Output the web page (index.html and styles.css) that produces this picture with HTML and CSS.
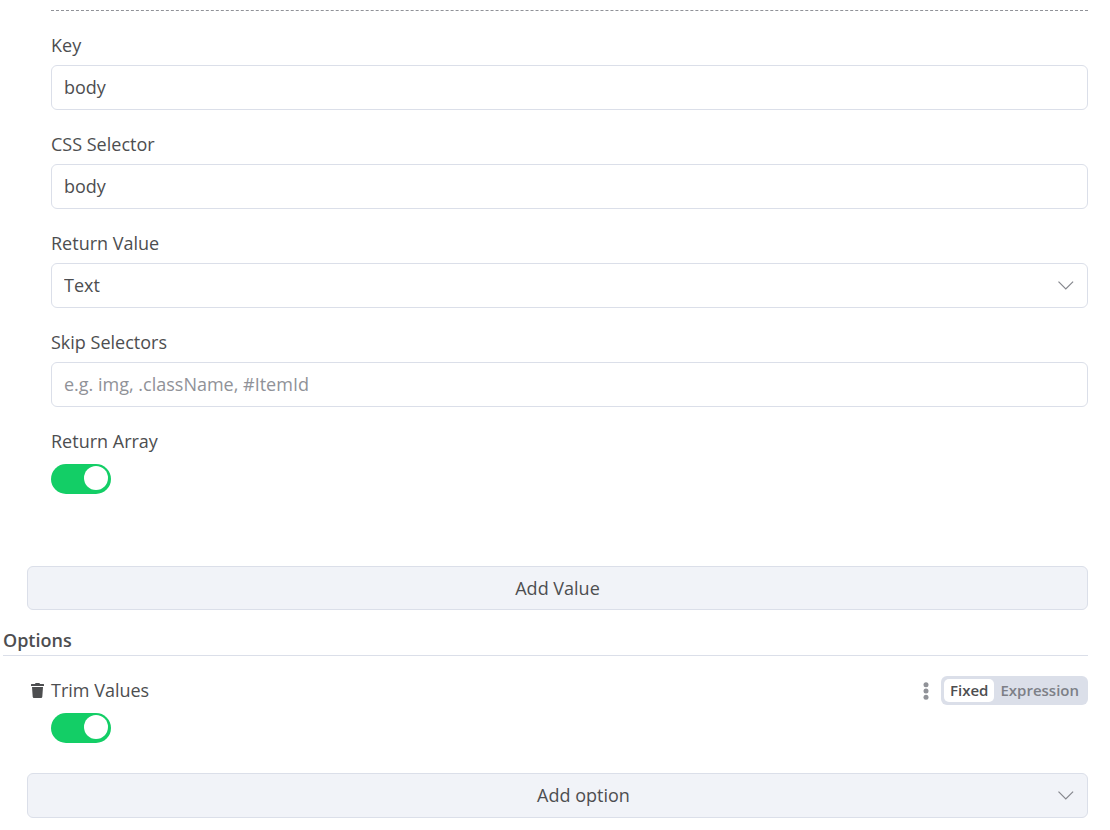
FILE: index.html
```html
<!DOCTYPE html>
<html lang="en">
<head>
<meta charset="utf-8">
<meta name="viewport" content="width=device-width, initial-scale=1">
<title>Node parameters</title>
<link rel="stylesheet" href="styles.css">
</head>
<body>
<form class="parameters">
  <section class="values">
    <div class="value-item">
      <div class="field">
        <label class="label" for="key">Key</label>
        <input class="control" id="key" type="text" value="body">
      </div>
      <div class="field">
        <label class="label" for="css-selector">CSS Selector</label>
        <input class="control" id="css-selector" type="text" value="body">
      </div>
      <div class="field">
        <label class="label" for="return-value">Return Value</label>
        <div class="select-wrap">
          <select class="control" id="return-value"><option>Text</option></select>
          <svg class="chevron" viewBox="0 0 16 9" aria-hidden="true"><path d="M0.5 0.7 7.8 8 15.1 0.7"/></svg>
        </div>
      </div>
      <div class="field">
        <label class="label" for="skip-selectors">Skip Selectors</label>
        <input class="control" id="skip-selectors" type="text" placeholder="e.g. img, .className, #ItemId">
      </div>
      <div class="field">
        <label class="label" for="return-array">Return Array</label>
        <input class="switch" id="return-array" type="checkbox" role="switch" checked>
      </div>
    </div>
    <button class="add-button" type="button">Add Value</button>
  </section>

  <section class="options">
    <h2 class="heading">Options</h2>
    <div class="option">
      <div class="option-header">
        <button class="icon-button" type="button" aria-label="Delete">
          <svg class="trash" viewBox="0 0 13 15" aria-hidden="true"><path d="M0.5 1H4L4.6 0H8.4L9 1H12.5Q13 1 13 1.5V3H0V1.5Q0 1 0.5 1ZM1 4H12L11.3 13.7Q11.2 15 10 15H3Q1.8 15 1.7 13.7Z"/></svg>
        </button>
        <label class="label" for="trim-values">Trim Values</label>
        <button class="icon-button menu" type="button" aria-label="Parameter options">
          <svg class="dots" viewBox="0 0 6 18" aria-hidden="true"><circle cx="3" cy="2.7" r="2.5"/><circle cx="3" cy="9" r="2.5"/><circle cx="3" cy="15.3" r="2.5"/></svg>
        </button>
        <div class="segmented">
          <button class="segment selected" type="button" aria-pressed="true">Fixed</button>
          <button class="segment" type="button" aria-pressed="false">Expression</button>
        </div>
      </div>
      <input class="switch" id="trim-values" type="checkbox" role="switch" checked>
    </div>
    <div class="select-wrap add-option">
      <select class="control" aria-label="Add option"><option>Add option</option></select>
      <svg class="chevron" viewBox="0 0 16 9" aria-hidden="true"><path d="M0.5 0.7 7.8 8 15.1 0.7"/></svg>
    </div>
  </section>
</form>
</body>
</html>
```
FILE: styles.css
```css
* {
  box-sizing: border-box;
}

body {
  margin: 0;
  background: #fff;
  color: #4d4e50;
  font: 18px/24px "Open Sans", sans-serif;
}

button,
input,
select {
  margin: 0;
  color: inherit;
  font: inherit;
}

.parameters {
  padding: 10px 22px 12px 3px;
}

.values {
  padding-left: 24px;
}

.value-item {
  display: grid;
  gap: 22px;
  margin: 0 0 72px 24px;
  padding-top: 22px;
  border-top: 1px dashed #909298;
}

.field {
  display: grid;
  gap: 8px;
}

.label {
  justify-self: start;
}

.control {
  display: block;
  width: 100%;
  height: 45px;
  padding: 0 12px 2px;
  border: 1px solid #dbdfe9;
  border-radius: 6px;
  background: #fff;
  appearance: none;
}

.control::placeholder {
  color: #909298;
  opacity: 1;
}

.select-wrap {
  position: relative;
}

.chevron {
  position: absolute;
  top: 18px;
  right: 14px;
  width: 16px;
  height: 9px;
  fill: none;
  stroke: #85878d;
  stroke-width: 1.2;
  pointer-events: none;
}

.switch {
  position: relative;
  display: block;
  width: 60px;
  height: 30px;
  border-radius: 15px;
  background: #cfd3dd;
  appearance: none;
}

.switch::after {
  content: "";
  position: absolute;
  top: 2px;
  left: 3px;
  width: 24px;
  height: 24px;
  border-radius: 50%;
  background: #fff;
}

.switch:checked {
  background: #13ce66;
}

.switch:checked::after {
  right: 3px;
  left: auto;
}

.field .switch {
  margin-top: 3px;
}

.add-button {
  display: block;
  width: 100%;
  height: 44px;
  border: 1px solid #dbdfe9;
  border-radius: 6px;
  background: #f1f3f8;
}

.heading {
  margin: 18px 0 20px;
  padding-bottom: 3px;
  border-bottom: 1px solid #dbdfe9;
  font-size: 18px;
  font-weight: 600;
}

.option {
  padding-left: 48px;
}

.option-header {
  display: flex;
  align-items: center;
  margin: 0 0 8px -20px;
}

.icon-button {
  display: flex;
  padding: 0;
  border: 0;
  background: none;
}

.trash {
  width: 13px;
  height: 15px;
  fill: currentColor;
}

.option-header .label {
  margin-left: 7px;
  padding-bottom: 1px;
}

.menu {
  margin: 0 12px 0 auto;
}

.dots {
  width: 6px;
  height: 18px;
  fill: #909298;
}

.segmented {
  display: flex;
  padding: 3px;
  border-radius: 6px;
  background: #dbdfe9;
}

.segment {
  height: 23px;
  padding: 0 6px;
  border: 0;
  border-radius: 5px;
  background: none;
  color: #7d7f87;
  font-size: 15px;
  font-weight: 600;
  line-height: 23px;
}

.segment.selected {
  background: #fff;
  color: #4d4e50;
}

.add-option {
  margin: 30px 0 0 24px;
}

.add-option .control {
  padding: 0 12px 2px 64px;
  background: #f1f3f8;
  text-align-last: center;
}
```
